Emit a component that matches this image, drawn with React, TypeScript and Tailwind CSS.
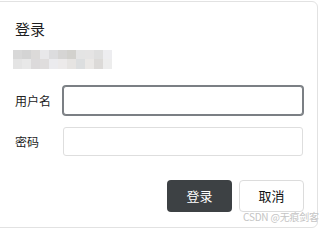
import React from "react";

const row1 = ["#d8d8d8", "#d4d4d4", "#dcdad9", "#e8e8ea", "#dcdcde", "#d6d5d4", "#d2d1cd", "#e4e4e4", "#e5e4e4", "#dfdfdf", "#ededf0"];
const row2 = ["#e4e4e4", "#e8e8e8", "#dcdadb", "#dfdddd", "#ebebee", "#eceaea", "#e6e4e2", "#dcdedf", "#eae8e6", "#dcdad8", "#ededed"];

export default function App() {
  return (
    <div
      className="relative w-[322px] h-[230px] overflow-hidden bg-white"
      style={{ fontFamily: '"Noto Sans CJK SC", "Liberation Sans", sans-serif' }}
    >
      <div className="mt-[1px] -ml-[6px] w-[324px] h-[227px] border border-[#e2e2e2] rounded-[6px] bg-white pl-[20px] pr-[13px] pt-[17px] flex flex-col">
        <div className="text-[15px] leading-[20px] text-[#1f1f1f]">登录</div>
        <div className="mt-[11px] ml-[-2px] flex flex-col w-[99px]">
          <div className="flex h-[9px]">
            {row1.map((c, i) => (
              <div key={i} className="h-full w-[9px]" style={{ backgroundColor: c }} />
            ))}
          </div>
          <div className="flex h-[10px]">
            {row2.map((c, i) => (
              <div key={i} className="h-full w-[9px]" style={{ backgroundColor: c }} />
            ))}
          </div>
        </div>
        <div className="mt-[17px] flex items-center">
          <div className="w-[48px] text-[12px] text-[#222]">用户名</div>
          <div className="w-[240px] h-[29px] border border-[#7b7f84] ring-1 ring-[#7b7f84] rounded-[3px] bg-white" />
        </div>
        <div className="mt-[12px] flex items-center">
          <div className="w-[48px] text-[12px] text-[#222]">密码</div>
          <div className="w-[240px] h-[29px] border border-[#dedede] rounded-[3px] bg-white" />
        </div>
        <div className="mt-[24px] flex justify-end gap-[7px]">
          <button className="w-[65px] h-[32px] rounded-[4px] bg-[#3d4144] text-white text-[13px]">登录</button>
          <button className="w-[65px] h-[32px] rounded-[4px] border border-[#dcdcdc] bg-white text-[#111] text-[13px]">取消</button>
        </div>
      </div>
      <div className="absolute left-[243px] top-[210px] text-[10px] leading-[13px] tracking-[-0.2px] text-[#c4c4c4] whitespace-nowrap">
        CSDN @无痕剑客
      </div>
    </div>
  );
}
